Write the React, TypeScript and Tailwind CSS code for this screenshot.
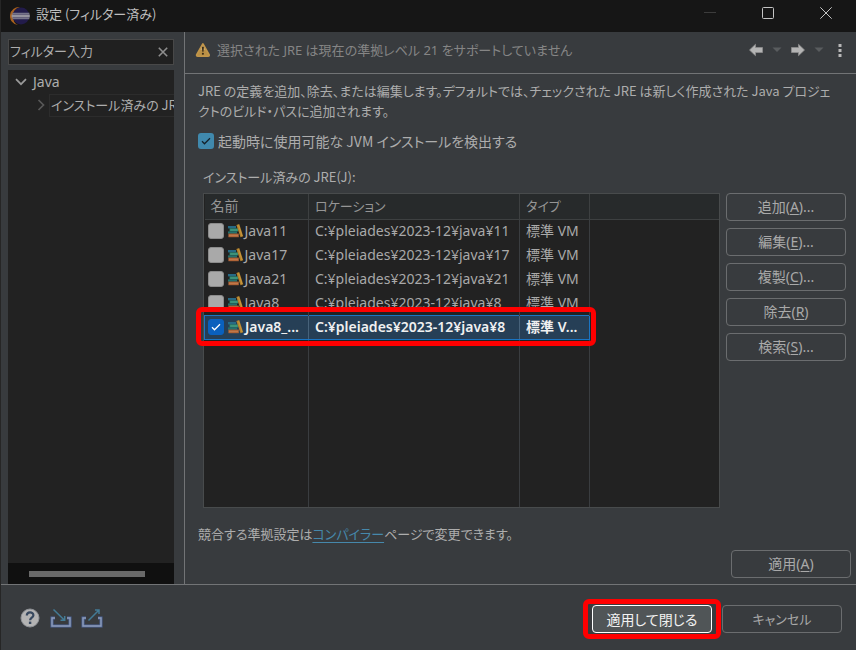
import { useState } from "react";
import type { ReactNode } from "react";

type Jre = { name: string; location: string; type: string };

const jres: Jre[] = [
  { name: "Java11", location: "C:¥pleiades¥2023-12¥java¥11", type: "標準 VM" },
  { name: "Java17", location: "C:¥pleiades¥2023-12¥java¥17", type: "標準 VM" },
  { name: "Java21", location: "C:¥pleiades¥2023-12¥java¥21", type: "標準 VM" },
  { name: "Java8", location: "C:¥pleiades¥2023-12¥java¥8", type: "標準 VM" },
  { name: "Java8_1", location: "C:¥pleiades¥2023-12¥java¥8", type: "標準 VM" },
];

const actions = [
  { label: "追加", key: "A", dots: true },
  { label: "編集", key: "E", dots: true },
  { label: "複製", key: "C", dots: true },
  { label: "除去", key: "R", dots: false },
  { label: "検索", key: "S", dots: true },
];

function EclipseLogo() {
  return (
    <svg width="20" height="20" viewBox="0 0 20 20" aria-hidden="true">
      <path d="M10 1A9 9 0 0 0 8 19Q3 17 3 10T10 1Z" fill="#a8611f" />
      <circle cx="11" cy="10" r="8.4" fill="#221b4a" />
      <path d="M2.4 7.5h17M2.4 12.5h17" stroke="#76748a" strokeWidth="1.5" />
      <path d="M1.6 10h18.2" stroke="#96949f" strokeWidth="3" />
    </svg>
  );
}

function WarningIcon() {
  return (
    <svg width="16" height="16" viewBox="0 0 16 16" aria-hidden="true">
      <path d="M7.9 2 14 12.6q.5 1.6-1 1.6H2.8q-1.5 0-1-1.6Z" fill="#b98f45" stroke="#c19549" strokeWidth="1.8" strokeLinejoin="round" />
      <path d="M7.9 3.2 10.5 8H5.3Z" fill="#c9aa72" />
      <path d="M6.9 4.8h2l-.4 5h-1.2Z" fill="#392c18" />
      <rect x="6.9" y="10.8" width="2" height="2" rx=".8" fill="#392c18" />
    </svg>
  );
}

function ArrowIcon({ right = false }: { right?: boolean }) {
  return (
    <svg width="16" height="16" viewBox="0 0 16 16" aria-hidden="true">
      <path
        d={right ? "M1.5 5.5h7V2.3L14.5 8l-6 5.7v-3.2h-7Z" : "M14.5 5.5h-7V2.3L1.5 8l6 5.7v-3.2h7Z"}
        fill="#b4b4b4"
        stroke="#8d8d8d"
        strokeWidth=".8"
        strokeLinejoin="round"
      />
    </svg>
  );
}

function Triangle() {
  return (
    <svg width="10" height="6" viewBox="0 0 10 6" aria-hidden="true">
      <path d="M.5.5h9L5 5Z" fill="#595c5e" />
    </svg>
  );
}

function BooksIcon() {
  return (
    <svg width="16" height="16" viewBox="0 0 16 16" aria-hidden="true" className="shrink-0">
      <rect x="0" y="3" width="8" height="2.4" fill="#276a85" />
      <rect x="1.6" y="5.4" width="8.4" height="3" fill="#2b8a6e" />
      <path d="M2.4 7h7" stroke="#5aa08b" strokeWidth=".8" />
      <rect x="0" y="8.4" width="9" height="2.2" fill="#24716c" />
      <rect x=".4" y="10.6" width="10.4" height="3.6" fill="#b06437" />
      <path d="M1 12.4h9" stroke="#c78558" strokeWidth=".7" />
      <path d="m8.4 2 2.8-.9 4 12.2-2.7.9Z" fill="#b5832c" />
      <path d="m10.6 2.2 3.4 10.8" stroke="#d3a54e" strokeWidth=".6" />
    </svg>
  );
}

function TrayIcon({ out = false }: { out?: boolean }) {
  return (
    <svg width="22" height="20" viewBox="0 0 22 20" aria-hidden="true">
      <path d="M5 10H2v8h18v-8h-3" fill="none" stroke="#4a6396" strokeWidth="3" />
      <path d="M5 10H2v8h18v-8h-3" fill="none" stroke="#8e9cb8" strokeWidth="1.4" />
      {out ? (
        <path d="M7.5 12.5 18 2M14 2h4v4" fill="none" stroke="#437b96" strokeWidth="1.5" />
      ) : (
        <path d="M3.5 1.5 14.5 12.3M10.5 12.3h4.2V8" fill="none" stroke="#437b96" strokeWidth="1.5" />
      )}
    </svg>
  );
}

function HelpIcon() {
  return (
    <svg width="20" height="20" viewBox="0 0 20 20" aria-hidden="true">
      <circle cx="10" cy="10" r="9" fill="#b3b3b3" stroke="#8f9297" />
      <path d="M6.8 7.6c0-4.4 6.6-4.2 6.6-.4 0 2.4-3.3 2.5-3.3 5" fill="none" stroke="#37485f" strokeWidth="2.2" />
      <rect x="8.9" y="13.6" width="2.4" height="2.4" fill="#37485f" />
    </svg>
  );
}

function Check({ color }: { color: string }) {
  return (
    <svg width="10" height="10" viewBox="0 0 10 10" aria-hidden="true" className="pointer-events-none col-start-1 row-start-1">
      <path d="m1 5.3 2.5 2.5L9 2.2" fill="none" stroke={color} strokeWidth="1.3" />
    </svg>
  );
}

function DialogButton({ children, variant = "normal" }: { children: ReactNode; variant?: "normal" | "primary" | "small" }) {
  const looks = {
    normal: "border-[#6b6d6f] text-[14px] text-[#a9a9a9]",
    small: "border-[#6b6d6f] text-[13px] text-[#a9a9a9]",
    primary: "border-white bg-[#505557] text-[14px] text-[#f2f2f2]",
  };
  return (
    <button type="button" className={"h-7 w-[120px] rounded border leading-5 " + looks[variant]}>
      {children}
    </button>
  );
}

export default function App() {
  const [filter, setFilter] = useState("フィルター入力");
  const [detect, setDetect] = useState(true);
  const [active, setActive] = useState(4);

  return (
    <div className="flex h-screen min-h-[480px] flex-col overflow-hidden border-l border-[#262626] bg-[#383b3e] font-['Noto_Sans_CJK_JP',sans-serif] text-[14px] leading-5 text-[#adadad] [font-feature-settings:'palt']">
      <header className="flex h-8 shrink-0 items-center bg-[#161616] pr-px pl-[9px]">
        <EclipseLogo />
        <h1 className="ml-[6px] flex-1 pb-1 text-[13px] text-[#bdbdbd]">設定 (フィルター済み)</h1>
        <button type="button" aria-label="最小化" className="grid h-6 w-[58px] place-items-center pb-[6px]">
          <svg width="12" height="12" viewBox="0 0 12 12"><path d="M0 5.5h12" stroke="#3c3c3c" /></svg>
        </button>
        <button type="button" aria-label="最大化" className="grid h-6 w-[58px] place-items-center pb-[6px]">
          <svg width="12" height="12" viewBox="0 0 12 12"><rect x=".5" y=".5" width="11" height="11" rx="1" fill="none" stroke="#c4c4c4" /></svg>
        </button>
        <button type="button" aria-label="閉じる" className="grid h-6 w-[58px] place-items-center pb-[6px]">
          <svg width="12" height="12" viewBox="0 0 12 12"><path d="m.3.3 11.4 11.4m0-11.4L.3 11.7" stroke="#c4c4c4" /></svg>
        </button>
      </header>

      <div className="flex min-h-0 flex-1 border-b border-[#727476]">
        <aside className="flex w-[184px] shrink-0 flex-col border-r border-[#727476] pt-[7px] pr-[10px] pl-[7px]">
          <div className="flex h-[26px] shrink-0 items-center border border-[#484848] bg-[#202020] pr-[5px]">
            <input
              aria-label="フィルター入力"
              value={filter}
              onChange={(e) => setFilter(e.target.value)}
              className="min-w-0 flex-1 bg-transparent pb-[2px] pl-px text-[13px] leading-5 text-[#adadad] outline-none"
            />
            <button type="button" aria-label="クリア" onClick={() => setFilter("")}>
              <svg width="10" height="10" viewBox="0 0 10 10"><path d="m.8.8 8.4 8.4m0-8.4L.8 9.2" stroke="#8e8e8e" strokeWidth="1.6" /></svg>
            </button>
          </div>
          <ul className="mt-[5px] flex-1 overflow-hidden bg-[#222222] whitespace-nowrap">
            <li className="flex h-6 items-center pl-[7px]">
              <svg width="12" height="8" viewBox="0 0 12 8" aria-hidden="true"><path d="m1 1.2 5 5 5-5" fill="none" stroke="#999" strokeWidth="1.7" /></svg>
              <span className="ml-[6px] font-['Noto_Sans',sans-serif]">Java</span>
            </li>
            <li className="flex h-[22px] items-center pl-[29px]">
              <svg width="8" height="12" viewBox="0 0 8 12" aria-hidden="true" className="shrink-0"><path d="m1.5 1 5 5-5 5" fill="none" stroke="#585858" strokeWidth="1.7" /></svg>
              <span className="ml-1 h-[23px] min-w-0 flex-1 border border-r-0 border-[#2c2c2c] pl-px text-[13px]">インストール済みの JR</span>
            </li>
          </ul>
          <div className="h-[21px] shrink-0 bg-[#101010] pt-2 pr-[29px] pl-[21px]">
            <div className="h-[6px] bg-[#696969]" />
          </div>
        </aside>

        <main className="flex min-w-0 flex-1 flex-col">
          <div className="flex h-[42px] shrink-0 items-center border-b border-[#727476] pr-[14px] pb-[6px] pl-[10px] text-[#858585]">
            <WarningIcon />
            <p className="ml-[6px] flex-1 font-['Noto_Sans','Noto_Sans_CJK_JP',sans-serif] text-[13px]">選択された JRE は現在の準拠レベル 21 をサポートしていません</p>
            <button type="button" aria-label="戻る"><ArrowIcon /></button>
            <button type="button" aria-label="戻る履歴" className="ml-2"><Triangle /></button>
            <button type="button" aria-label="進む" className="ml-2"><ArrowIcon right /></button>
            <button type="button" aria-label="進む履歴" className="ml-2"><Triangle /></button>
            <button type="button" aria-label="メニュー" className="ml-[14px]">
              <svg width="4" height="14" viewBox="0 0 4 14"><path d="M.5 1h3v3h-3ZM.5 6h3v3h-3ZM.5 11h3v3h-3Z" fill="#b8b8b8" /></svg>
            </button>
          </div>

          <div className="flex min-h-0 flex-1 flex-col pt-[7px] pl-[13px]">
            <p className="text-[13px] whitespace-nowrap">
              JRE の定義を追加、除去、または編集します。デフォルトでは、チェックされた JRE は新しく作成された Java プロジェ
              <br />
              クトのビルド・パスに追加されます。
            </p>
            <label className="mt-[10px] flex items-center gap-1">
              <span className="grid place-items-center">
                <input
                  type="checkbox"
                  checked={detect}
                  onChange={() => setDetect(!detect)}
                  className="col-start-1 row-start-1 size-4 appearance-none rounded-[3px] bg-[#a9a9a9] checked:bg-[#4089ad]"
                />
                {detect && <Check color="#14222b" />}
              </span>
              起動時に使用可能な JVM インストールを検出する
            </label>
            <h2 id="jre-list" className="mt-4 ml-[5px] text-[13px]">インストール済みの JRE(J):</h2>

            <div className="mt-[6px] flex min-h-0 flex-1 gap-[6px] pr-[10px] pl-[5px]">
              <div className="relative min-w-0 flex-1 border border-[#484b4c] bg-[#222222]">
                <table aria-labelledby="jre-list" className="h-full w-full table-fixed border-collapse font-['Noto_Sans','Noto_Sans_CJK_JP',sans-serif] whitespace-nowrap">
                  <colgroup>
                    <col className="w-[104px]" />
                    <col className="w-[211px]" />
                    <col className="w-[70px]" />
                    <col />
                  </colgroup>
                  <thead>
                    <tr className="h-[25px] border-b border-[#3d4041] bg-[#272a2b] text-left text-[#959595]">
                      <th className="border-r border-[#3d4041] p-0 pl-[6px] font-normal">名前</th>
                      <th className="border-r border-[#3d4041] p-0 pl-[6px] text-[13px] font-normal">ロケーション</th>
                      <th className="border-r border-[#3d4041] p-0 pl-[6px] text-[13px] font-normal">タイプ</th>
                      <th className="p-0"></th>
                    </tr>
                  </thead>
                  <tbody>
                    {jres.map((jre, i) => {
                      const on = i === active;
                      return (
                        <tr key={jre.name} className={on ? "h-6 bg-[#263f56] font-semibold text-[#f0f0f0]" : "h-6 text-[#a9a9a9]"}>
                          <td className={on ? "border border-[#1a75c4] border-r-[#47627a] p-0" : "border-r border-[#3a3d40] p-0"}>
                            <div className="flex items-center pl-[3px]">
                              <span className="grid shrink-0 place-items-center">
                                <input
                                  type="checkbox"
                                  aria-label={jre.name}
                                  checked={on}
                                  onChange={() => setActive(i)}
                                  className="col-start-1 row-start-1 size-4 appearance-none rounded-[3px] border border-[#8b8b8b] bg-[#a9a9a9] checked:border-[#0a60bd] checked:bg-[#0a60bd]"
                                />
                                {on && <Check color="#ffffff" />}
                              </span>
                              <span className="ml-1"><BooksIcon /></span>
                              <span className="ml-px">{on ? "Java8_..." : jre.name}</span>
                            </div>
                          </td>
                          <td className={on ? "border border-[#1a75c4] border-r-[#47627a] p-0 pl-[6px]" : "border-r border-[#3a3d40] p-0 pl-[6px]"}>{jre.location}</td>
                          <td className={on ? "border border-[#1a75c4] p-0 pl-[6px]" : "border-r border-[#3a3d40] p-0 pl-[6px]"}>{on ? "標準 V..." : jre.type}</td>
                          <td className="bg-[#222222] p-0"></td>
                        </tr>
                      );
                    })}
                    <tr>
                      <td className="border-r border-[#3a3d40] p-0"></td>
                      <td className="border-r border-[#3a3d40] p-0"></td>
                      <td className="border-r border-[#3a3d40] p-0"></td>
                      <td className="p-0"></td>
                    </tr>
                  </tbody>
                </table>
                <div className="pointer-events-none absolute top-[113px] -left-2 h-[39px] w-[400px] rounded-md border-5 border-[#ff0000]" />
              </div>
              <div className="flex shrink-0 flex-col gap-[7px] font-['Noto_Sans','Noto_Sans_CJK_JP',sans-serif]">
                {actions.map((a) => (
                  <DialogButton key={a.key}>
                    {a.label}(<u className="underline-offset-2">{a.key}</u>){a.dots && "..."}
                  </DialogButton>
                ))}
              </div>
            </div>

            <p className="mt-4 text-[13px]">
              競合する準拠設定は
              <a href="#compiler" className="text-[#4688ab] underline underline-offset-3">コンパイラー</a>
              ページで変更できます。
            </p>
            <div className="mt-[6px] mb-[6px] flex justify-end pr-[5px] font-['Noto_Sans','Noto_Sans_CJK_JP',sans-serif]">
              <DialogButton>適用(<u className="underline-offset-2">A</u>)</DialogButton>
            </div>
          </div>
        </main>
      </div>

      <footer className="flex h-[65px] shrink-0 items-center pr-[14px] pl-[19px]">
        <div className="flex flex-1 items-center gap-[10px]">
          <button type="button" aria-label="ヘルプ"><HelpIcon /></button>
          <button type="button" aria-label="インポート"><TrayIcon /></button>
          <button type="button" aria-label="エクスポート" className="-ml-px"><TrayIcon out /></button>
        </div>
        <div className="flex gap-[10px] pt-[2px]">
          <div className="relative">
            <DialogButton variant="primary">適用して閉じる</DialogButton>
            <div className="pointer-events-none absolute -inset-x-[9px] -inset-y-[6px] rounded-md border-5 border-[#ff0000]" />
          </div>
          <DialogButton variant="small">キャンセル</DialogButton>
        </div>
      </footer>
    </div>
  );
}
